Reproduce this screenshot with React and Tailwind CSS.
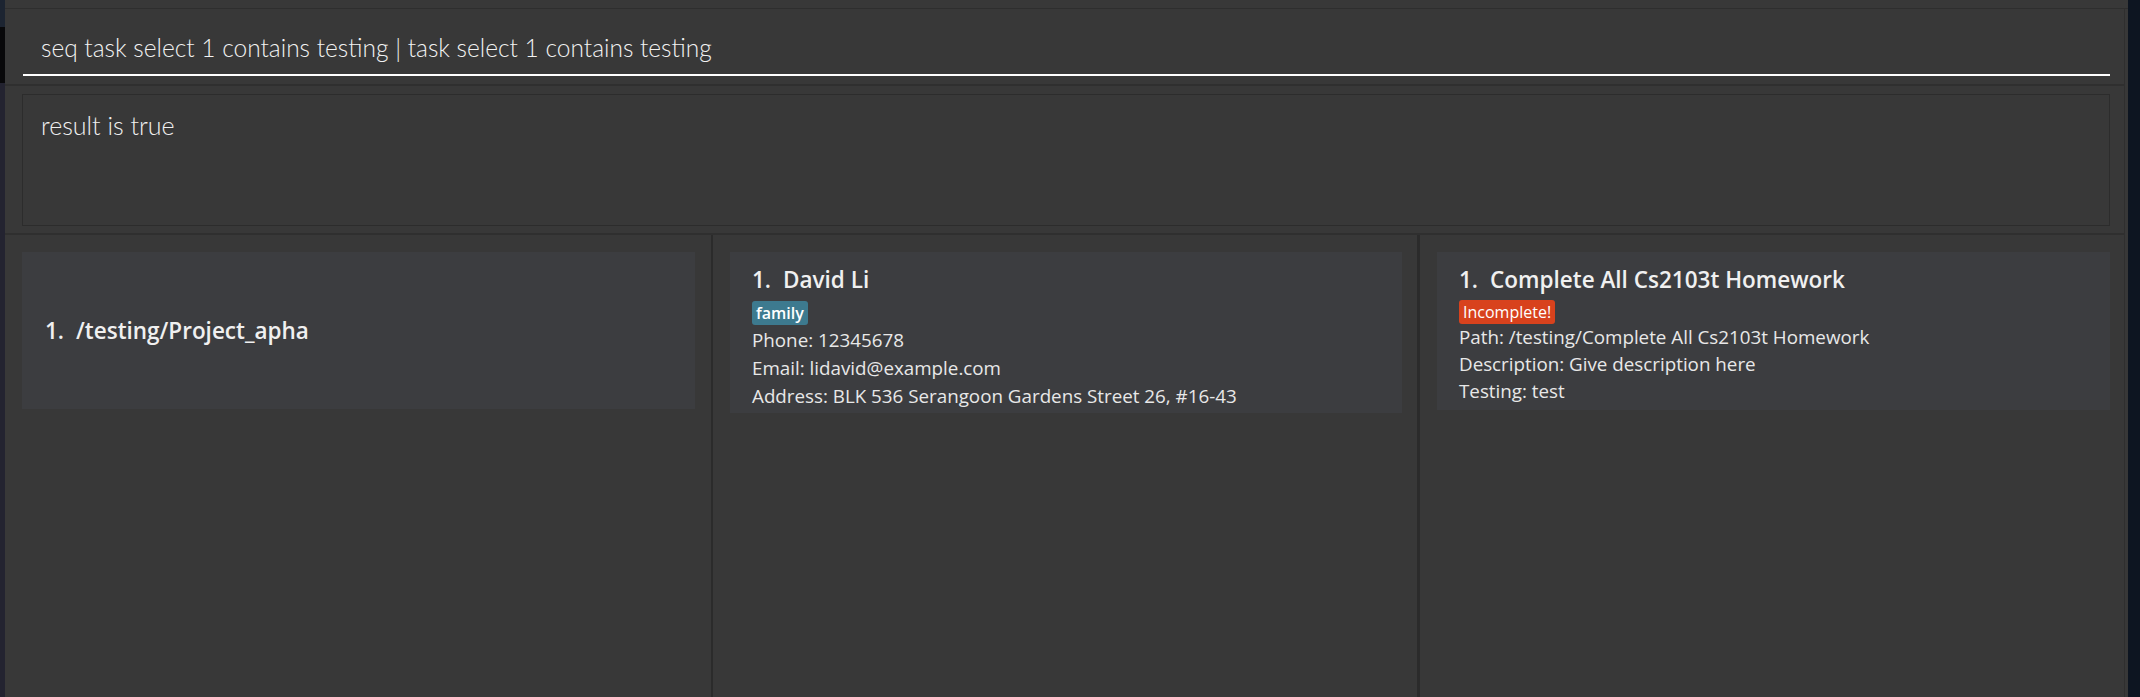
import React from "react";

const FONT = { fontFamily: '"Open Sans", "Noto Sans", "Liberation Sans", sans-serif' };

function Tag({ children, className }) {
  return (
    <span className={`inline-flex h-[24px] items-center rounded-[3px] px-[4px] text-[16px] leading-none text-white ${className}`}>
      {children}
    </span>
  );
}

export default function App() {
  return (
    <div className="flex h-[697px] w-[2140px] overflow-hidden bg-[#0d1521] text-[#eeeeee]" style={FONT}>
      {/* left strip of another window */}
      <div className="flex w-[5px] flex-col">
        <div className="h-[27px] bg-[#1c2431]" />
        <div className="h-[56px] bg-[#08080a]" />
        <div className="flex-1 bg-[#232330]" />
      </div>

      {/* main window */}
      <div className="flex w-[2123px] flex-col bg-[#383838]">
        <div className="h-[9px] border-b border-[#2e2e2e]" />

        {/* command box */}
        <div className="mr-[3px] flex h-[77px] flex-col border-b-2 border-r border-[#2f2f2f] pl-[18px] pr-[14px] pt-[24px]">
          <div className="border-b-2 border-white pb-[11px] pl-[18px]">
            <div className="h-[30px] whitespace-pre font-['Lato'] text-[24.5px] font-light leading-[30px] text-[#f2f2f2]">
              seq task select 1 contains testing | task select 1 contains testing
            </div>
          </div>
        </div>

        {/* result display */}
        <div className="mr-[3px] h-[149px] border-b-2 border-r border-[#2f2f2f] pb-[7px] pl-[17px] pr-[14px] pt-[8px]">
          <div className="h-[132px] border border-[#2c2c2c] pl-[18px] pt-[16px]">
            <div className="font-['Lato'] text-[25px] font-light leading-[28px] text-[#f0f0f0]">result is true</div>
          </div>
        </div>

        {/* three columns */}
        <div className="mr-[3px] flex flex-1 border-r border-[#2f2f2f]">
          <div className="w-[708px] border-r-2 border-[#2b2b2b] pl-[17px] pr-[16px] pt-[17px]">
            <div className="flex h-[157px] items-center bg-[#3c3d40] pl-[23px]">
              <div className="text-[22.5px] font-semibold leading-[30px] text-[#f0f0f0]">
                <span className="mr-[12px]">1.</span>/testing/Project_apha
              </div>
            </div>
          </div>

          <div className="w-[707px] border-r-[3px] border-[#2b2b2b] pl-[17px] pr-[15px] pt-[17px]">
            <div className="flex h-[161px] flex-col items-start bg-[#3c3d40] pl-[22px] pt-[13px]">
              <div className="text-[22.5px] font-semibold leading-[30px] text-[#f0f0f0]">
                <span className="mr-[12px]">1.</span>David Li
              </div>
              <Tag className="mt-[6px] bg-[#3d7a8f] font-semibold">family</Tag>
              <div className="mt-[1px] text-[18.8px] leading-[28px] text-[#e8e8e8]">Phone: 12345678</div>
              <div className="text-[18.8px] leading-[28px] text-[#e8e8e8]">Email: lidavid@example.com</div>
              <div className="text-[18.8px] leading-[28px] text-[#e8e8e8]">Address: BLK 536 Serangoon Gardens Street 26, #16-43</div>
            </div>
          </div>

          <div className="flex-1 pl-[17px] pr-[14px] pt-[17px]">
            <div className="flex h-[158px] flex-col items-start bg-[#3c3d40] pl-[22px] pt-[13px]">
              <div className="text-[22.5px] font-semibold leading-[30px] text-[#f0f0f0]">
                <span className="mr-[12px]">1.</span>Complete All Cs2103t Homework
              </div>
              <Tag className="mt-[5px] bg-[#d8421d]">Incomplete!</Tag>
              <div className="text-[18.8px] leading-[27px] text-[#e8e8e8]">Path: /testing/Complete All Cs2103t Homework</div>
              <div className="text-[18.8px] leading-[27px] text-[#e8e8e8]">Description: Give description here</div>
              <div className="text-[18.8px] leading-[27px] text-[#e8e8e8]">Testing: test</div>
            </div>
          </div>
        </div>
      </div>
    </div>
  );
}
